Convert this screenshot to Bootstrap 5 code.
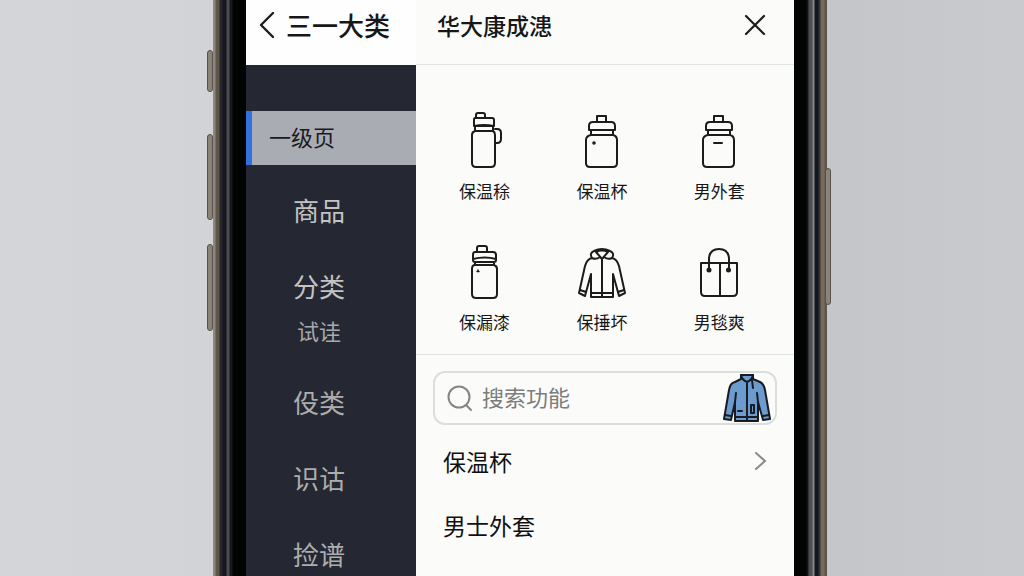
<!DOCTYPE html>
<html lang="zh-CN">
<head>
<meta charset="utf-8">
<meta name="viewport" content="width=device-width, initial-scale=1">
<title>商品分类</title>
<link href="https://cdn.jsdelivr.net/npm/bootstrap@5.3.0/dist/css/bootstrap.min.css" rel="stylesheet">
<style>
  body { font-family: "Noto Sans CJK SC", sans-serif; color: #171717; background: linear-gradient(90deg, #d3d5d8, #d0d1d5 50%, #c5c6ca 82%, #c9cacd); }
  a, button { color: inherit; text-decoration: none; }
  .stage { display: grid; grid-template-columns: 213fr 614fr 197fr; min-height: 100vh; }
  .phone { grid-column: 2; position: relative; display: flex; min-width: 0; }
  .rail { flex: 0 0 33px; }
  .rail-start { background: linear-gradient(90deg, #8e877a 0 2px, #5c554c 3px 6px, #29272a 7px 9px, #15161f 10px 13px, #4a4b50 14px 16px, #17181a 17px 19px, #020303 20px); }
  .rail-end { background: linear-gradient(270deg, #5e564e 0 2px, #786b5c 3px 6px, #393330 7px 8px, #101824 9px 12px, #8a8484 13px 14px, #4c4d52 15px 18px, #17191b 19px, #020303 21px); }
  .side-key { position: absolute; width: 6px; background: #8a8377; border: 1px solid #57524b; border-radius: 3px; }
  .key-a { left: -6px; top: 50px; height: 42px; }
  .key-b { left: -6px; top: 134px; height: 86px; }
  .key-c { left: -6px; top: 244px; height: 87px; }
  .key-d { right: -4px; top: 168px; height: 137px; }
  .screen { flex: 1; min-width: 0; background: #fbfbfa; }
  .side { width: 31%; background: #252833; color: #c3c3c3; }
  .main-pane { min-width: 0; }
  .top-bar { height: 65px; padding-bottom: 15px; }
  .side .top-bar { background: #fefefe; color: #171717; padding-left: 12px; }
  .side h1 { font-size: 26px; line-height: 36px; font-weight: 500; }
  .main-title { font-size: 23px; line-height: 36px; font-weight: 500; }
  .main-bar { padding-left: 21px; padding-right: 28px; border-bottom: 1px solid #e2e3e3; }
  .current { margin-top: 46px; height: 54px; padding-left: 17px; padding-bottom: 4px; border-left: 6px solid #3270de; background: #a9acb3; color: #1b1b1e; font-size: 22px; }
  .side-list { padding-right: 24px; text-align: center; font-size: 26px; line-height: 36px; }
  .side-list > li { margin-top: 40px; }
  .side-list > li:first-child { margin-top: 27px; }
  .side-list .sub { margin-top: 12px; font-size: 22px; line-height: 28px; color: #a9a9aa; }
  .later { color: #adadae; }
  .goods { display: grid; grid-template-columns: repeat(3, 1fr); row-gap: 38px; padding: 45px 16px 20px 10px; border-bottom: 1px solid #e2e3e3; }
  .goods a { display: flex; flex-direction: column; align-items: center; gap: 9px; font-size: 17px; line-height: 24px; }
  .line-art { fill: none; stroke: #1c1c1c; stroke-width: 2; stroke-linejoin: round; stroke-linecap: round; }
  .search { margin: 16px 17px 0; height: 54px; padding-left: 12px; padding-right: 4px; border: 2px solid #dcdddd; border-radius: 12px; gap: 9px; }
  .search input { min-width: 0; padding: 0 0 4px; font-size: 22px; line-height: 32px; background: transparent; color: #333; outline: 0; }
  .search input::placeholder { color: #7c7c7c; opacity: 1; }
  .links { padding: 4px 27px 0; font-size: 23px; }
  .links a { height: 64px; color: #101010; }
</style>
</head>
<body>
<div class="stage">
  <div class="phone">
    <span class="side-key key-a"></span><span class="side-key key-b"></span><span class="side-key key-c"></span><span class="side-key key-d"></span>
    <div class="rail rail-start"></div>
    <div class="screen d-flex">
      <nav class="side flex-shrink-0" aria-label="分类">
        <header class="top-bar d-flex align-items-center gap-2">
          <button type="button" class="btn p-0 border-0 d-flex" aria-label="返回">
            <svg class="line-art" width="20" height="28" viewBox="0 0 20 28"><path d="M15 2 3 14l12 12" stroke-width="2.4"/></svg>
          </button>
          <h1 class="m-0 text-nowrap">三一大类</h1>
        </header>
        <a href="#" class="current d-flex align-items-center" aria-current="page">一级页</a>
        <ul class="side-list list-unstyled m-0">
          <li><a href="#">商品</a></li>
          <li><a href="#">分类</a>
            <ul class="list-unstyled"><li class="sub"><a href="#">试诖</a></li></ul>
          </li>
          <li class="later"><a href="#">伇类</a></li>
          <li class="later"><a href="#">识诂</a></li>
          <li class="later"><a href="#">捡谱</a></li>
        </ul>
      </nav>
      <main class="main-pane flex-grow-1">
        <header class="top-bar main-bar d-flex align-items-center justify-content-between">
          <h2 class="main-title m-0">华大康成漶</h2>
          <button type="button" class="btn p-0 border-0 d-flex" aria-label="关闭">
            <svg class="line-art" width="22" height="22" viewBox="0 0 22 22"><path d="m2 2 18 18M20 2 2 20" stroke-width="2.2"/></svg>
          </button>
        </header>
        <section class="goods">
          <a href="#">
            <svg class="line-art" width="60" height="60" viewBox="0 0 60 60"><path d="M21 7V5q0-2 2-2h5q2 0 2 2v3M20 8h17q2 0 2 2v6H19v-6q0-2 1-2zM19 16q10-2 20 0M20 17v4q-3 1-3 4v28q0 4 4 4h15q4 0 4-4V25q0-3-2-4v-4M20 21h18M40 19h2q4 0 4 4v6q0 4-4 4h-2"/></svg>
            保温稌</a>
          <a href="#">
            <svg class="line-art" width="60" height="60" viewBox="0 0 60 60"><path d="M25 11V6h9v5M21 12h18q4 0 4 4v4H17v-4q0-4 4-4zM19 20v5M41 20v5M19 25h22q4 1 4 5v23q0 4-4 4H18q-4 0-4-4V30q0-4 5-5z"/><circle cx="22" cy="33" r=".8" fill="#1c1c1c"/></svg>
            保温杯</a>
          <a href="#">
            <svg class="line-art" width="60" height="60" viewBox="0 0 60 60"><path d="M25 11V6h9v5M21 12h18q4 0 4 4v4H17v-4q0-4 4-4zM19 20v5M41 20v5M19 25h22q4 1 4 5v23q0 4-4 4H18q-4 0-4-4V30q0-4 5-5zM25 33h8"/></svg>
            男外套</a>
          <a href="#">
            <svg class="line-art" width="60" height="60" viewBox="0 0 60 60"><path d="M22 10V7q0-2 2-2h6q2 0 2 2v3M20 11h18q3 0 3 3v5q0 2-2 2H20q-2 0-2-2v-5q0-3 2-3zM18 18q12-3 23 0M20 21v3M39 21v3M20 24h19q3 1 3 4v25q0 4-4 4H21q-4 0-4-4V28q0-4 3-4z"/><path d="M22 30.500h2M23 29v1" stroke-width="1.500"/></svg>
            保漏漆</a>
          <a href="#">
            <svg class="line-art" width="60" height="60" viewBox="0 0 60 60"><path d="M20 17q-3-5 2-7 8-4 16 0 5 2 2 7-4 2-8-1l-2 2-2-2q-4 3-8 1zM24 11q6-3 12 0l-6 7zM20 17q-5 1-7 8L7 52l6 3 6-22v23h22V33l6 22 6-3-6-27q-2-7-7-8M30 18v38M19 52h22M8 49l6 2M52 49l-6 2"/></svg>
            保捶坏</a>
          <a href="#">
            <svg class="line-art" width="60" height="60" viewBox="0 0 60 60"><path d="M12 22h36v29q0 4-4 4H16q-4 0-4-4zM31 22v33M20 29V17q1-9 10-9t10 9v12"/><circle cx="20" cy="29" r="1.500" fill="#1c1c1c"/><circle cx="39.500" cy="29" r="1.500" fill="#1c1c1c"/></svg>
            男毯爽</a>
        </section>
        <form class="search d-flex align-items-center" role="search">
          <svg class="flex-shrink-0" width="26" height="28" viewBox="0 0 26 28" fill="none" stroke="#858585" stroke-width="2" stroke-linecap="round"><circle cx="12" cy="13" r="10.500"/><path d="m19 21 5 5"/></svg>
          <input type="search" class="flex-grow-1 border-0" placeholder="搜索功能" aria-label="搜索功能">
          <svg class="flex-shrink-0" width="48" height="50" viewBox="0 0 48 50" fill="#6c9bd0" stroke="#191b20" stroke-width="2" stroke-linejoin="round" stroke-linecap="round"><path d="M18 2h12v4l7 3q4 2 5 8l5 29-7 1-5-18v19H12V29L8 47l-7-1 5-29q1-7 6-8l6-3z"/><path d="M18 2q1 5 6 7 5-2 6-7M24 9v38M12 44h23M12 29l1-9M35 29l-1-9M2 42l6 1M40 43l6-1M29 7l1 8M15 38h4M28 32h3v8h-3z" fill="none"/></svg>
        </form>
        <nav class="links" aria-label="功能">
          <a href="#" class="d-flex align-items-center justify-content-between">保温杯
            <svg width="14" height="22" viewBox="0 0 14 22" fill="none" stroke="#8a8a8a" stroke-width="2" stroke-linecap="round"><path d="m3 3 9 8-9 8"/></svg>
          </a>
          <a href="#" class="d-flex align-items-center">男士外套</a>
        </nav>
      </main>
    </div>
    <div class="rail rail-end"></div>
  </div>
</div>
<script src="https://cdn.jsdelivr.net/npm/bootstrap@5.3.0/dist/js/bootstrap.bundle.min.js"></script>
</body>
</html>
